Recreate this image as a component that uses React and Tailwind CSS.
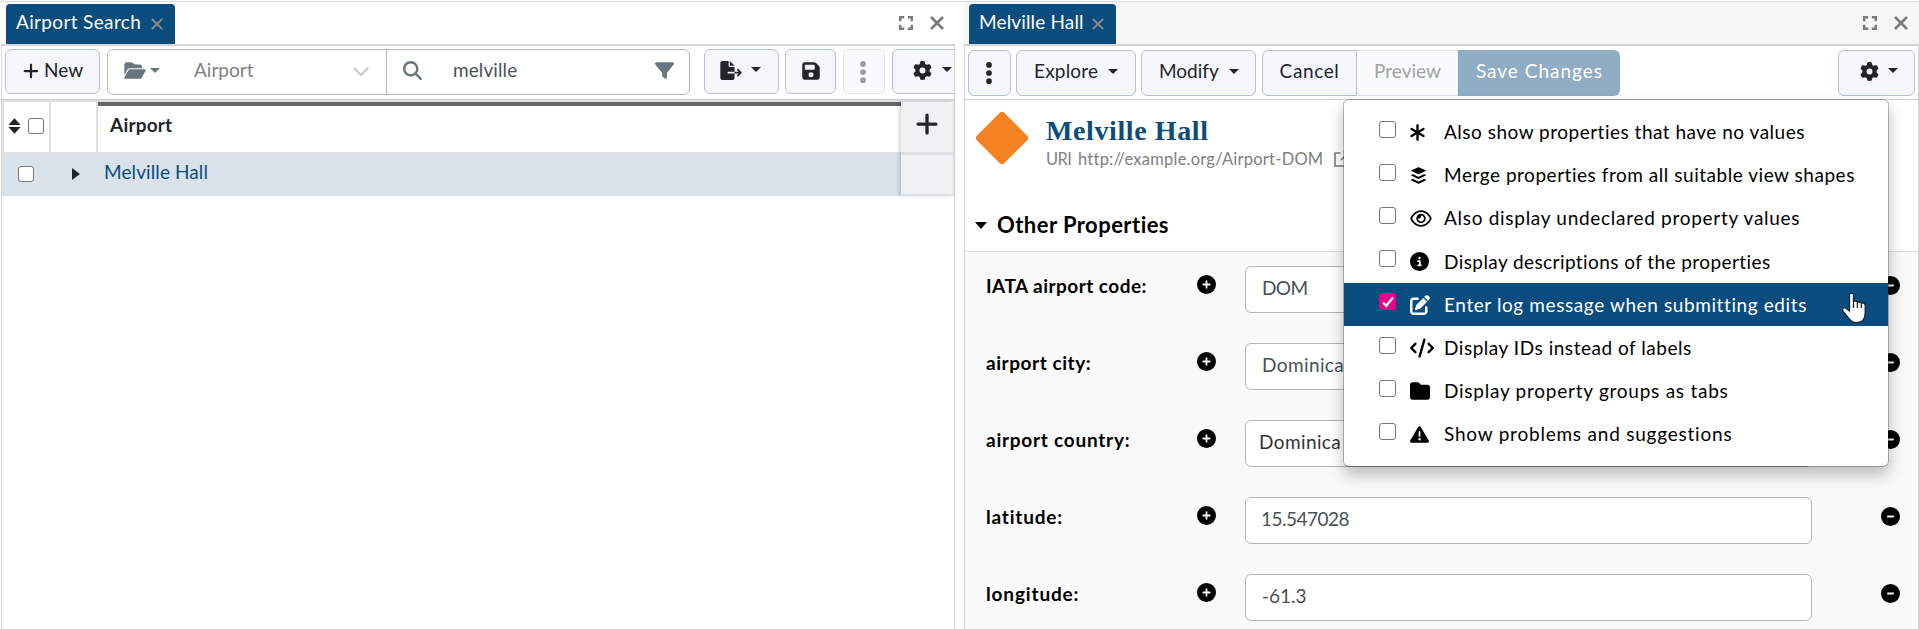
import {
  FaPlus, FaFolderOpen, FaMagnifyingGlass, FaFilter, FaFileExport, FaFloppyDisk,
  FaEllipsisVertical, FaGear, FaAsterisk, FaBuffer, FaRegEye, FaCircleInfo,
  FaPenToSquare, FaCode, FaFolder, FaTriangleExclamation, FaCirclePlus, FaCircleMinus,
} from 'react-icons/fa6';

const BTN = 'flex shrink-0 items-center border border-[#b3bfdc] bg-[#f5f7fc] text-[#212529]';

function Caret({ className = '' }) {
  return (
    <svg viewBox="0 0 10 5" className={'mb-[3px] h-[5px] w-[10px] shrink-0 ' + className} fill="currentColor">
      <path d="M0 0h10L5 5z" />
    </svg>
  );
}

function Expand() {
  return (
    <svg viewBox="0 0 14 14" className="size-[14px]" fill="none" stroke="#7b7b7b" strokeWidth="2.4">
      <path d="M1.2 5.2v-4h4M8.8 1.2h4v4M12.8 8.8v4h-4M5.2 12.8h-4v-4" />
    </svg>
  );
}

function Cross({ size, width, color }) {
  return (
    <svg viewBox="0 0 14 14" width={size} height={size} fill="none" stroke={color} strokeWidth={width}>
      <path d="M1 1l12 12M13 1L1 13" />
    </svg>
  );
}

function TabBar({ title, titleClass, className, tabClass, endClass }) {
  return (
    <div className={'flex h-[42px] justify-between pt-[2px] ' + className}>
      <div className={'flex h-10 items-center rounded-t bg-[#0a4c7d] pb-[3px] text-[19px] text-white ' + tabClass}>
        <span className={titleClass}>{title}</span>
        <span className="mt-[2px] ml-auto"><Cross size={12} width={2.4} color="#8b8b87" /></span>
      </div>
      <div className={'flex items-center gap-[17px] pb-[3px] ' + endClass}>
        <Expand />
        <Cross size={14} width={2.6} color="#7b7b7b" />
      </div>
    </div>
  );
}

function Box({ className = 'size-4' }) {
  return <span className={'block shrink-0 rounded-[3px] border border-[#767676] bg-white ' + className} />;
}

function LeftPanel() {
  return (
    <section className="flex w-[955px] shrink-0 flex-col pl-px">
      <TabBar title="Airport Search" titleClass="tracking-[0.35px]" className="pl-[5px]" tabClass="w-[169px] pr-3 pl-[10px]" endClass="pr-[11px]" />
      <div className="flex flex-1 flex-col border border-t-2 border-[#d5d5d5] border-b-0">
        <div className="flex h-[54px] shrink-0 items-start overflow-hidden border-b border-[#c9cbcd] pt-[3px] pl-[3px]">
          <div className={BTN + ' h-[45px] w-[95px] rounded-md pb-[2px] pl-4'}>
            <FaPlus className="size-[18px]" />
            <span className="ml-1 pb-px text-[19px]">New</span>
          </div>
          <div className="ml-[7px] flex h-[46px] w-[583px] shrink-0 items-center rounded-md border border-[#b5b5b5] bg-white text-[19px]">
            <div className="flex h-full w-[279px] items-center border-r border-[#b5b5b5] pr-[17px] pb-[3px] pl-4">
              <FaFolderOpen className="h-[19px] w-[22px] text-[#6c757d]" />
              <Caret className="mt-[2px] ml-[4px] text-[#6c757d]" />
              <span className="ml-[34px] text-[#808080]">Airport</span>
              <svg viewBox="0 0 16 10" className="mt-[3px] ml-auto h-[10px] w-4" fill="none" stroke="#cccccc" strokeWidth="2.4" strokeLinecap="round" strokeLinejoin="round">
                <path d="M1.5 1.5L8 8l6.500-6.500" />
              </svg>
            </div>
            <div className="flex h-full flex-1 items-center pr-[15px] pb-[3px] pl-4">
              <FaMagnifyingGlass className="size-[19px] text-[#6c757d]" />
              <span className="ml-[31px] tracking-[0.1px] text-[#495057]">melville</span>
              <FaFilter className="ml-auto size-[19px] text-[#6c757d]" />
            </div>
          </div>
          <div className={BTN + ' ml-[14px] h-[45px] w-[75px] rounded-md pb-[2px] pl-[15px]'}>
            <FaFileExport className="h-[19px] w-[22px]" />
            <Caret className="ml-[9px]" />
          </div>
          <div className={BTN + ' ml-[6px] h-[45px] w-[51px] justify-center rounded-md pb-[2px]'}>
            <FaFloppyDisk className="size-[20px]" />
          </div>
          <div className={BTN + ' ml-[7px] h-[45px] w-[42px] justify-center rounded-md opacity-45'}>
            <FaEllipsisVertical className="mr-[2px] size-[26px]" />
          </div>
          <div className={BTN + ' ml-[7px] h-[45px] w-[77px] rounded-md pb-[2px] pl-5'}>
            <FaGear className="size-[19px]" />
            <Caret className="ml-[10px]" />
          </div>
        </div>
        <div className="flex h-[96px] shrink-0 bg-[#dee0e4] pt-[2px] pr-[1px] pl-[2px]">
          <div className="flex flex-1 flex-col">
            <div className="flex h-[50px] bg-[#dee0e4]">
              <div className="flex w-[45px] items-center gap-[7px] bg-white pb-[2px] pl-[3px]">
                <svg viewBox="0 0 14 18" className="ml-[1px] h-[18px] w-[13px]" fill="#212529">
                  <path d="M7 .6L13.600 8H.4zM7 17.400L.4 10h13.200z" />
                </svg>
                <Box />
              </div>
              <div className="ml-[2px] w-[45px] bg-white" />
              <div className="ml-[2px] flex flex-1 items-center border-t-4 border-[#666666] bg-white pl-3">
                <span className="pb-[8px] text-[19px] font-bold tracking-[0.2px] text-[#212529]">Airport</span>
              </div>
            </div>
            <div className="mt-[3px] flex h-10 bg-[#d9e2eb]">
              <div className="flex w-[45px] items-center pb-[2px] pl-[14px]"><Box /></div>
              <div className="ml-px flex w-[46px] items-center border-l border-[#dee0e4] pb-[2px] pl-[21px]">
                <svg viewBox="0 0 8 12" className="h-[12px] w-[8px]" fill="#212529"><path d="M0 0l8 6-8 6z" /></svg>
              </div>
              <div className="ml-px flex flex-1 items-center border-l border-[#dee0e4] pb-[5px] pl-[6px] text-[19px] tracking-[0.1px] text-[#0a4c7d]">Melville Hall</div>
            </div>
          </div>
          <div className="flex w-[52px] flex-col gap-[3px] shadow-[-2px_0_3px_rgba(0,0,0,0.16)]">
            <div className="flex h-[50px] items-start justify-center bg-[#f0f1f3] pt-[9px]">
              <FaPlus className="size-[26px] text-[#212529]" />
            </div>
            <div className="h-[39px] bg-[#f0f1f3]" />
          </div>
        </div>
      </div>
    </section>
  );
}

const FIELDS = [
  { label: 'IATA airport code:', labelClass: 'tracking-[0.47px]', value: 'DOM', valueClass: 'pl-4 tracking-[-0.6px] text-[#495057]' },
  { label: 'airport city:', labelClass: 'tracking-[0.55px]', value: 'Dominica', valueClass: 'pl-4 tracking-[0.4px] text-[#495057]' },
  { label: 'airport country:', labelClass: 'tracking-[0.75px]', value: 'Dominica', valueClass: 'pl-[13px] tracking-[0.4px] text-[#333333]' },
  { label: 'latitude:', labelClass: 'tracking-[0.8px]', value: '15.547028', valueClass: 'pl-[15px] tracking-[-0.5px] text-[#495057]' },
  { label: 'longitude:', labelClass: 'tracking-[0.85px]', value: '-61.3', valueClass: 'pl-4 text-[#495057]' },
];

const OPTIONS = [
  { icon: FaAsterisk, iconClass: 'size-[19px] -ml-[2px]', label: 'Also show properties that have no values', labelClass: 'tracking-[0.5px]' },
  { icon: FaBuffer, iconClass: 'size-[19px] -ml-px', label: 'Merge properties from all suitable view shapes', labelClass: 'tracking-[0.53px]' },
  { icon: FaRegEye, iconClass: 'h-[19px] w-[22px]', label: 'Also display undeclared property values', labelClass: 'tracking-[0.71px]' },
  { icon: FaCircleInfo, iconClass: 'size-[19px]', label: 'Display descriptions of the properties', labelClass: 'tracking-[0.42px]' },
  { icon: FaPenToSquare, iconClass: 'size-[20px]', label: 'Enter log message when submitting edits', labelClass: 'tracking-[0.6px]', checked: true },
  { icon: FaCode, iconClass: 'h-[20px] w-[24px]', label: 'Display IDs instead of labels', labelClass: 'tracking-[0.53px]' },
  { icon: FaFolder, iconClass: 'size-[20px]', label: 'Display property groups as tabs', labelClass: 'tracking-[0.75px]' },
  { icon: FaTriangleExclamation, iconClass: 'size-[19px]', label: 'Show problems and suggestions', labelClass: 'tracking-[0.78px]' },
];

function OptionsMenu() {
  return (
    <div className="absolute top-[99px] left-[1343px] z-10 h-[368px] w-[546px] rounded-md border border-[#00000040] bg-white bg-clip-padding py-[11px] shadow-[0_8px_16px_rgba(0,0,0,0.25)]">
      {OPTIONS.map(({ icon: Icon, iconClass, label, labelClass, checked }) => (
        <div key={label} className={'flex h-[43.1px] items-center pl-[35px] text-[19px] ' + (checked ? 'bg-[#0a4c7d] text-white' : 'text-black')}>
          {checked ? (
            <span className="mb-[6px] flex size-[17px] shrink-0 items-center justify-center rounded-[2px] bg-[#e6008c]">
              <svg viewBox="0 0 12 12" className="size-3" fill="none" stroke="white" strokeWidth="2.300"><path d="M1 6.500l3.300 3.200L11 1.500" /></svg>
            </span>
          ) : <Box className="mb-[6px] size-[17px]" />}
          <span className="ml-[14px] flex w-[34px] shrink-0 items-center"><Icon className={iconClass} /></span>
          <span className={'whitespace-nowrap ' + labelClass}>{label}</span>
        </div>
      ))}
      <svg viewBox="0 0 26 32" className="absolute top-[192px] left-[497px] h-[32px] w-[26px]" fill="white" stroke="#1c2733" strokeWidth="1.300" strokeLinejoin="round">
        <path d="M8.500 19V3.200C8.500.4 12.500.4 12.500 3.200v6.500c.6-1 3.400-.9 3.900.7.900-.8 3.400-.6 3.900 1 1.200-.9 3.900-.3 3.900 2v7.200c0 6-3 10.100-8.500 10.100-4 0-6.500-1.800-8.500-5L2.200 19.300c-1.900-2.700.9-4.700 3-2.900z" />
        <path d="M12.500 9.500V16M16.400 10.500V16M20.300 11.500V16" fill="none" />
      </svg>
    </div>
  );
}

function RightPanel() {
  return (
    <section className="ml-[9px] flex w-[955px] shrink-0 flex-col">
      <TabBar title="Melville Hall" titleClass="tracking-[0.15px]" className="bg-[#f6f6f6] pl-[5px]" tabClass="w-[147px] pr-3 pl-[10px]" endClass="pr-[11px]" />
      <div className="flex flex-1 flex-col border border-t-2 border-[#d5d5d5] border-b-0">
        <div className="flex h-[54px] shrink-0 items-start border-b border-[#c9cbcd] pt-1 pr-[3px] pl-[3px] text-[19px]">
          <div className={BTN + ' h-[46px] w-[43px] justify-center rounded-md pb-px'}><FaEllipsisVertical className="mr-[2px] size-[26px]" /></div>
          <div className={BTN + ' ml-[5px] h-[46px] w-[120px] rounded-md pl-[17px]'}>
            <span className="w-[65px] pb-[3px] tracking-[0.2px]">Explore</span><Caret className="ml-[9px]" />
          </div>
          <div className={BTN + ' ml-[5px] h-[46px] w-[115px] rounded-md pl-[17px]'}>
            <span className="w-[60px] pb-[3px]">Modify</span><Caret className="ml-[10px]" />
          </div>
          <div className={BTN + ' ml-[6px] h-[46px] w-[95px] justify-center rounded-l-md pb-[3px] tracking-[0.6px]'}>Cancel</div>
          <div className="flex h-[46px] w-[101px] items-center justify-center border-y border-[#dfe4f0] bg-[#fafbfd] pb-[3px] text-[#a1a3a5]">Preview</div>
          <div className="flex h-[46px] w-[162px] items-center justify-center rounded-r-md border-l border-[#7fa3c2] bg-[#91adc6] pb-[3px] tracking-[1px] text-white">Save Changes</div>
          <div className={BTN + ' ml-auto h-[46px] w-[77px] rounded-md pb-[3px] pl-[21px]'}>
            <FaGear className="size-[19px]" /><Caret className="ml-[9px] mb-[1px]" />
          </div>
        </div>
        <div className="flex h-[152px] shrink-0 flex-col border-b border-[#d9dbdd] bg-white">
          <div className="flex h-[103px]">
            <svg viewBox="0 0 54 54" className="mt-[11px] ml-[10px] size-[54px]"><rect x="7.600" y="7.600" width="38.800" height="38.800" rx="3.500" fill="#f58220" transform="rotate(45 27 27)" /></svg>
            <div className="ml-[17px] pt-[15px]">
              <h1 className="font-['Liberation_Serif',serif] text-[28px] leading-[32px] font-bold tracking-[0.6px] text-[#0a4c7d]">Melville Hall</h1>
              <div className="flex items-center text-[16.5px] leading-[24px] text-[#808080]">
                <span className="w-[32px] tracking-[-0.6px]">URI</span>
                <span className="tracking-[0.24px]">http://example.org/Airport-DOM</span>
                <svg viewBox="0 0 16 16" className="ml-[11px] size-4" fill="none" stroke="#808080" strokeWidth="1.700"><path d="M6.500 2H1v13h13V9.500M9.500 1H15v5.500M15 1L7 9" /></svg>
              </div>
            </div>
          </div>
          <div className="flex items-center pl-[10px]">
            <svg viewBox="0 0 12 7" className="mt-px h-[7px] w-3"><path d="M0 0h12L6 7z" /></svg>
            <h2 className="ml-[10px] text-[22px] leading-[44px] font-bold tracking-[0.45px] text-black">Other Properties</h2>
          </div>
        </div>
        <div className="flex-1 bg-[#fafafa] pt-[14px]">
          {FIELDS.map(({ label, labelClass, value, valueClass }) => (
            <div key={label} className="flex h-[77.1px]">
              <span className={'w-[211px] pt-[6px] pl-[21px] text-[19px] leading-[28px] font-bold whitespace-nowrap text-black ' + labelClass}>{label}</span>
              <FaCirclePlus className="mt-[9px] ml-[21px] size-[19px] shrink-0 text-black" />
              <div className={'ml-[29px] flex h-[47px] w-[567px] shrink-0 items-center rounded-md border border-[#b5b5b5] bg-white pb-[3px] text-[19px] ' + valueClass}>{value}</div>
              <FaCircleMinus className="mt-[10px] ml-[69px] size-[19px] shrink-0 text-black" />
            </div>
          ))}
        </div>
      </div>
    </section>
  );
}

export default function App() {
  return (
    <main className="relative h-[629px] w-[1919px] overflow-hidden bg-white pt-px font-['Lato',sans-serif]">
      <div className="flex h-[628px] border-t border-[#dcdfe1]">
        <LeftPanel />
        <RightPanel />
      </div>
      <OptionsMenu />
    </main>
  );
}
